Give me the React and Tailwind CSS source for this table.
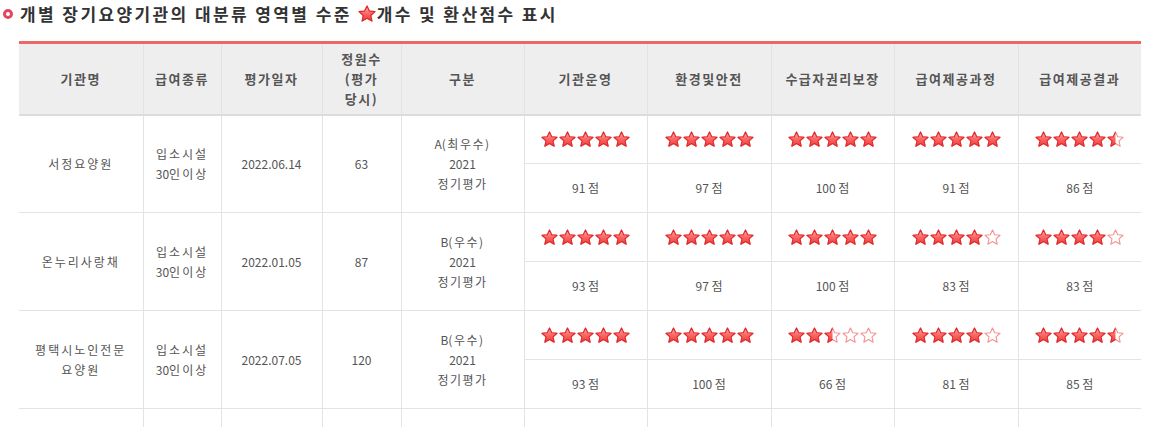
import React, { useId } from 'react';

const rows = [
  {
    name: ['서정요양원'],
    date: '2022.06.14',
    cap: '63',
    grade: ['A', '(최우수)'],
    stars: [5, 5, 5, 5, 4.5],
    scores: [91, 97, 100, 91, 86],
  },
  {
    name: ['온누리사랑채'],
    date: '2022.01.05',
    cap: '87',
    grade: ['B', '(우수)'],
    stars: [5, 5, 5, 4, 4],
    scores: [93, 97, 100, 83, 83],
  },
  {
    name: ['평택시노인전문', '요양원'],
    date: '2022.07.05',
    cap: '120',
    grade: ['B', '(우수)'],
    stars: [5, 5, 2.5, 4, 4.5],
    scores: [93, 100, 66, 81, 85],
  },
];

const areas = ['기관운영', '환경및안전', '수급자권리보장', '급여제공과정', '급여제공결과'];

const STAR = 'M8 0.9 L10.1 5.4 L15.1 5.9 L11.3 9.3 L12.4 14.3 L8 11.7 L3.6 14.3 L4.7 9.3 L0.9 5.9 L5.9 5.4 Z';

// fill: 1 full, 0.5 half, 0 empty
const Star = ({ fill = 1, size = 17 }) => {
  const id = useId().replace(/:/g, '');
  return (
    <svg width={size} height={size} viewBox="0 0 16 16" className="block">
      <defs>
        <linearGradient id={`g${id}`} x1="0" y1="0" x2="0" y2="1">
          <stop offset="0" stopColor="#ffb0b0" />
          <stop offset="0.5" stopColor="#fa6868" />
          <stop offset="1" stopColor="#ec3c3c" />
        </linearGradient>
        <clipPath id={`c${id}`}>
          <rect x="0" y="0" width={16 * fill} height="16" />
        </clipPath>
      </defs>
      <path d={STAR} fill="#fff" stroke="#f59090" strokeWidth="1" strokeLinejoin="round" />
      {fill > 0 && (
        <path
          d={STAR}
          fill={`url(#g${id})`}
          stroke="#e02828"
          strokeWidth="1"
          strokeLinejoin="round"
          clipPath={`url(#c${id})`}
        />
      )}
    </svg>
  );
};

const Stars = ({ value }) => {
  const items = [0, 1, 2, 3, 4].map(i => Math.max(0, Math.min(1, value - i)));
  return (
    <div className="flex justify-center gap-[1px]">
      {items.map((f, i) => <Star key={i} fill={f} />)}
    </div>
  );
};

const Th = ({ children }) => (
  <th className="border-l border-[#e3e3e3] first:border-l-0 border-b-2 border-b-[#dcdcdc] bg-[#eeeeee] text-[13px] font-bold text-[#555] leading-[20px] tracking-[1.5px] align-middle">
    {children}
  </th>
);

const cell = 'border-l border-b border-[#e3e3e3] text-center align-middle';

export default function App() {
  return (
    <div className="w-[1153px] h-[427px] overflow-hidden bg-white" style={{ fontFamily: '"Noto Sans CJK KR", "Noto Sans", sans-serif' }}>
      <h2 className="flex items-center h-[28px] pl-[3px] text-[17px] font-bold text-[#333] tracking-[2.4px]">
        <span className="w-[10px] h-[10px] rounded-full border-[3px] border-[#e4475c] mr-[7px]" />
        개별 장기요양기관의 대분류 영역별 수준
        <span className="ml-[6px] mr-[1px]"><Star size={18} /></span>
        개수 및 환산점수 표시
      </h2>

      <table className="ml-[19px] mt-[13px] w-[1122px] table-fixed border-collapse border-t-[3px] border-t-[#ec6868] text-[12px] text-[#555]">
        <colgroup>
          <col className="w-[124px]" />
          <col className="w-[78px]" />
          <col className="w-[101px]" />
          <col className="w-[79px]" />
          <col className="w-[123px]" />
          <col className="w-[123px]" />
          <col className="w-[124px]" />
          <col className="w-[123px]" />
          <col className="w-[124px]" />
          <col className="w-[123px]" />
        </colgroup>
        <thead>
          <tr className="h-[72px]">
            <Th>기관명</Th>
            <Th>급여종류</Th>
            <Th>평가일자</Th>
            <Th>정원수<br />(평가<br />당시)</Th>
            <Th>구분</Th>
            {areas.map(a => <Th key={a}>{a}</Th>)}
          </tr>
        </thead>
        <tbody className="leading-[20px]">
          {rows.map((r, ri) => (
            <React.Fragment key={ri}>
              <tr className="h-[49px]">
                <td rowSpan={2} className={`${cell} border-l-0 tracking-[2px]`}>
                  {r.name.map((n, i) => <div key={i}>{n}</div>)}
                </td>
                <td rowSpan={2} className={cell}>
                  <span className="tracking-[2px]">입소시설</span><br />
                  30<span className="tracking-[2px]">인이상</span>
                </td>
                <td rowSpan={2} className={cell}>{r.date}</td>
                <td rowSpan={2} className={cell}>{r.cap}</td>
                <td rowSpan={2} className={cell}>
                  {r.grade[0]}<span className="tracking-[1.5px]">{r.grade[1]}</span><br />
                  2021<br />
                  <span className="tracking-[1.5px]">정기평가</span>
                </td>
                {r.stars.map((s, i) => (
                  <td key={i} className={cell}><Stars value={s} /></td>
                ))}
              </tr>
              <tr className="h-[49px]">
                {r.scores.map((s, i) => (
                  <td key={i} className={cell}>{s} 점</td>
                ))}
              </tr>
            </React.Fragment>
          ))}
          <tr className="h-[49px]">
            <td className={`${cell} border-l-0`} />
            {[1, 2, 3, 4].map(i => <td key={i} className={cell} />)}
            {areas.map(a => <td key={a} className={cell} />)}
          </tr>
        </tbody>
      </table>
    </div>
  );
}
